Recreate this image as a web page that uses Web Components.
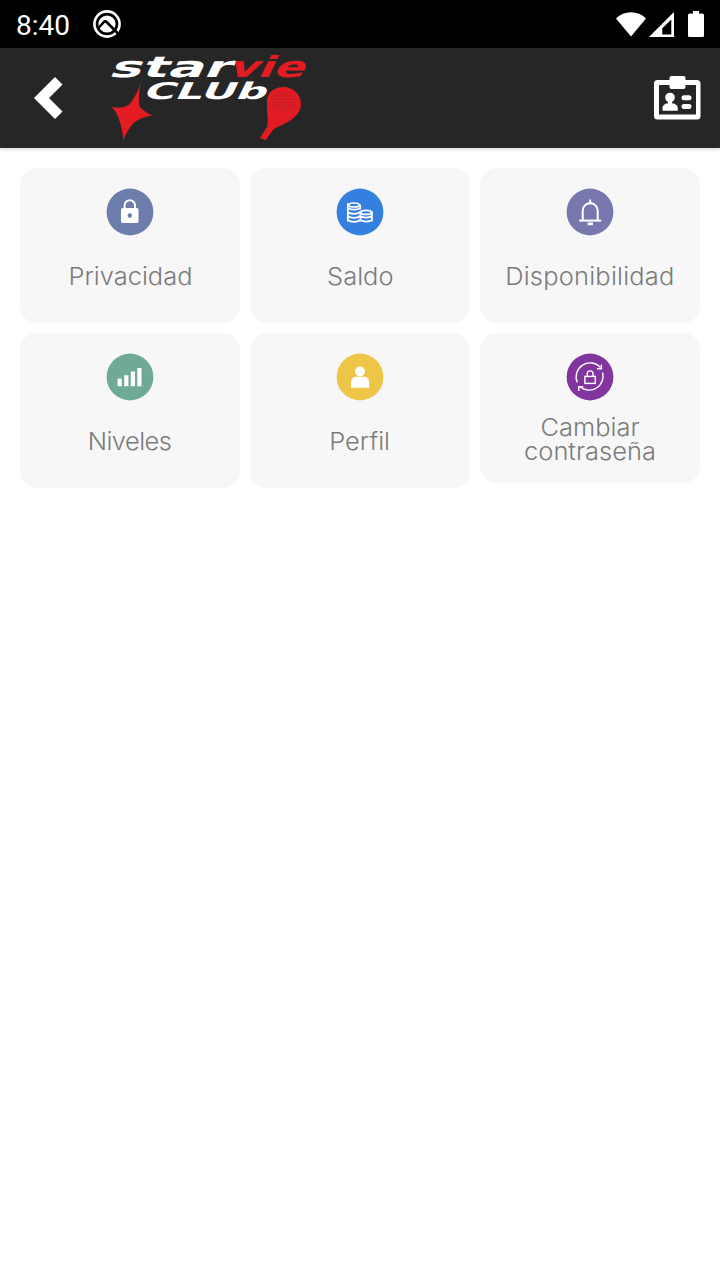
<!DOCTYPE html>
<html lang="es">
<head>
<meta charset="UTF-8">
<meta name="viewport" content="width=device-width, initial-scale=1.0">
<title>Starvie Club</title>
<style>
    :root {
        --color-bar: #262626;
        --color-card: #f7f7f7;
        --color-text: #7b7b7b;
        --color-brand: #e31b23;
    }

    body {
        margin: 0;
        min-height: 100vh;
        background: #fff;
        font-family: Inter, "Liberation Sans", sans-serif;
    }
</style>
</head>
<body>
    <status-bar hora="8:40"></status-bar>
    <app-header>
        <club-logo></club-logo>
    </app-header>
    <menu-grid>
        <menu-card icono="candado" color="#6d7dac">Privacidad</menu-card>
        <menu-card icono="monedas" color="#3480df">Saldo</menu-card>
        <menu-card icono="campana" color="#7678ae" style="--espacio: 0.2px">Disponibilidad</menu-card>
        <menu-card icono="barras" color="#6faa94" style="--espacio: -0.5px">Niveles</menu-card>
        <menu-card icono="persona" color="#edc547">Perfil</menu-card>
        <menu-card icono="cambiar" color="#82349f" compacta>Cambiar contraseña</menu-card>
    </menu-grid>

<script>
const ICONOS = {
    candado: `
        <rect x="15" y="20" width="17.5" height="15" rx="1.8" fill="#fff"/>
        <path d="M18.6 21v-3.6a5.2 5.2 0 0 1 10.4 0V21" fill="none" stroke="#fff" stroke-width="2"/>
        <circle cx="23.8" cy="27.5" r="2.2" fill="#6d7dac"/>`,
    monedas: `
        <g fill="none" stroke="#fff" stroke-width="1.7">
            <ellipse cx="18" cy="17" rx="5.3" ry="2"/>
            <path d="M11.8 15.2v18.2M11.8 19.8c3 2.4 9.5 2.4 12.5 0M24.2 16.5v5M11.8 24c3 2.4 9.5 2.4 12.5 0M11.8 28c3 2.4 9.5 2.4 12.5 0M11.8 32c3 2.4 9.5 2.4 12.5 0"/>
            <ellipse cx="30" cy="24.4" rx="5.3" ry="2"/>
            <path d="M24.4 23v10.4M36 23.5v9.9M24.4 28c3 2.2 8.6 2.2 11.6 0M24.4 32c3 2.2 8.6 2.2 11.6 0"/>
        </g>`,
    campana: `
        <g fill="none" stroke="#fff" stroke-width="2">
            <path d="M16.700 32v-9.300a7.500 7.500 0 0 1 15 0V32"/>
            <path d="M13.200 32.600h22"/>
            <path d="M24.200 11.500v4"/>
        </g>
        <rect x="21.6" y="34.6" width="5.4" height="2.6" rx=".6" fill="#fff"/>`,
    barras: `
        <path fill="#fff" d="M11.600 25.400h4.200v7.800h-4.200zM18.200 22.200h4.200v11h-4.200zM24.800 18.400h4.200v14.800h-4.200zM31.300 15h4.200v18.200h-4.200z"/>`,
    persona: `
        <circle cx="24" cy="18.500" r="4.900" fill="#fff"/>
        <path fill="#fff" d="M15 34.700v-5.200c0-3.800 2.500-5.800 5.400-5.800h7.400c2.900 0 5.400 2 5.400 5.800v5.200z"/>`,
    cambiar: `
        <g fill="none" stroke="#fff" stroke-width="1.4">
            <path d="M11.3 29.500A14 14 0 0 1 34.500 14.500M36.600 19.500A14 14 0 0 1 14 33.800"/>
            <path d="M35.400 11.500v4.200h-4.500M12.800 38v-4.300h4.500"/>
            <rect x="18.9" y="23.400" width="10.400" height="7"/>
            <path d="M21.200 23v-2.200a2.900 2.900 0 0 1 5.800 0v2.200"/>
        </g>`
};

class StatusBar extends HTMLElement {
    constructor() {
        super();
        this.attachShadow({ mode: 'open' });
    }

    connectedCallback() {
        const hora = this.getAttribute('hora') || '0:00';

        this.shadowRoot.innerHTML = `
            <style>
                :host {
                    display: flex;
                    align-items: center;
                    justify-content: space-between;
                    box-sizing: border-box;
                    height: 48px;
                    padding: 2px 14px 0 16px;
                    background: #000;
                    color: #fff;
                    font: 28px/48px Roboto, sans-serif;
                }

                .lado {
                    display: flex;
                    align-items: center;
                    gap: 22px;
                }

                span {
                    padding-top: 1px;
                }

                svg {
                    display: block;
                    margin-top: -2px;
                }
            </style>
            <div class="lado">
                <span>${hora}</span>
                <svg width="30" height="30" viewBox="0 0 30 30">
                    <circle cx="15" cy="15" r="12.600" fill="none" stroke="#fff" stroke-width="2.600"/>
                    <circle cx="15" cy="15" r="8.600" fill="#fff"/>
                    <path d="M6 19.500l6-6.500q1.300-1.200 2.600 0L26 24.500" fill="none" stroke="#000" stroke-width="2.500"/>
                </svg>
            </div>
            <svg width="90" height="30" viewBox="0 0 90 30">
                <path fill="#fff" d="M0 9.500C8 1 22 1 30 9.500L15 27.500z"/>
                <path fill="#fff" fill-rule="evenodd" d="M33 28L58 3v25zM46.300 25.500h9V10.600l-9 8.600z"/>
                <path fill="#fff" d="M77 2h6v2.500h3.500q1.500 0 1.500 1.500v20.500q0 1.500-1.500 1.500h-13q-1.500 0-1.500-1.500V6q0-1.500 1.500-1.500H77z"/>
            </svg>
        `;
    }
}

class ClubLogo extends HTMLElement {
    constructor() {
        super();
        this.attachShadow({ mode: 'open' });
    }

    connectedCallback() {
        this.shadowRoot.innerHTML = `
            <style>
                :host {
                    display: block;
                }

                svg {
                    display: block;
                }

                text {
                    font-family: "DejaVu Sans", sans-serif;
                    font-weight: 700;
                }

                .rojo {
                    fill: var(--color-brand);
                }
            </style>
            <svg width="220" height="100" viewBox="0 0 220 100" fill="#fff">
                <g transform="translate(8 28.500) skewX(-26)">
                    <text font-size="29" textLength="121" lengthAdjust="spacingAndGlyphs">star</text>
                    <text class="rojo" x="119" font-size="29" textLength="76" lengthAdjust="spacingAndGlyphs">vie</text>
                </g>
                <g transform="translate(42 50.500) skewX(-26)">
                    <text font-size="23" textLength="123" lengthAdjust="spacingAndGlyphs">CLUb</text>
                </g>
                <path class="rojo" d="M40.500 35Q38 49 39.500 58.500Q45 65 52.500 67.200Q40 69.500 33.500 75Q26 84 23.300 92.500Q22.500 81 19.500 73Q17 64 11.500 59Q22 61 29 57Q37 47 40.500 35z"/>
                <path class="rojo" d="M167 52C168 44 175 39 183 39C194 39 201 47 201 56C201 66 191 73 182 77C176 79.500 173 81 171.500 84L165.500 92.300L160 90L167 79C168.500 74 167.500 69 167 63z"/>
                <g stroke="#9f262a" stroke-width="1" stroke-dasharray="1.500 1.300" fill="none">
                    <path d="M178 45h14M174 48h22M172 51h25M172 54h25M172 57h24M174 60h20M178 63h13"/>
                </g>
            </svg>
        `;
    }
}

class AppHeader extends HTMLElement {
    constructor() {
        super();
        this.attachShadow({ mode: 'open' });
    }

    connectedCallback() {
        this.shadowRoot.innerHTML = `
            <style>
                :host {
                    display: flex;
                    align-items: center;
                    box-sizing: border-box;
                    height: 100px;
                    padding: 0 19px 0 34px;
                    background: var(--color-bar);
                    box-shadow: 0 1px 4px rgba(0, 0, 0, 0.2);
                }

                .logo {
                    flex: 1;
                    margin-left: 37px;
                }

                svg {
                    display: block;
                }
            </style>
            <svg width="29" height="42" viewBox="0 0 29 42">
                <path fill="#fff" d="M0 21L21 0l7.500 7.500L15 21l13.500 13.500L21 42z"/>
            </svg>
            <div class="logo"><slot></slot></div>
            <svg width="48" height="44" viewBox="0 0 48 44">
                <path fill="#fff" fill-rule="evenodd" d="M4 4h12.500V2q0-2 2-2h12q2 0 2 2v2H44q3.500 0 3.500 3.500v32.500q0 3.500-3.500 3.500H4.500Q1 43.500 1 40V7.500Q1 4 4.500 4zM6 9v29.500h37V9H32.500v2q0 2-2 2h-12q-2 0-2-2V9z"/>
                <circle cx="17" cy="21.500" r="4.800" fill="#fff"/>
                <path fill="#fff" d="M15 24h4v3.200q5.800.8 5.800 5v2.500H9.500v-2.500q0-4.200 5.500-5z"/>
                <path d="M31 21.700h5M31 30.600h5" stroke="#fff" stroke-width="5" stroke-linecap="round"/>
            </svg>
        `;
    }
}

class MenuGrid extends HTMLElement {
    constructor() {
        super();
        this.attachShadow({ mode: 'open' });
    }

    connectedCallback() {
        this.shadowRoot.innerHTML = `
            <style>
                :host {
                    display: grid;
                    grid-template-columns: repeat(3, 1fr);
                    align-items: start;
                    gap: 10px;
                    padding: 20px;
                }
            </style>
            <slot></slot>
        `;
    }
}

class MenuCard extends HTMLElement {
    constructor() {
        super();
        this.attachShadow({ mode: 'open' });
    }

    static get observedAttributes() {
        return ['icono', 'color'];
    }

    connectedCallback() {
        this.render();
    }

    attributeChangedCallback() {
        this.render();
    }

    render() {
        const icono = ICONOS[this.getAttribute('icono')] || '';
        const color = this.getAttribute('color') || '#999';

        this.shadowRoot.innerHTML = `
            <style>
                :host {
                    display: flex;
                    flex-direction: column;
                    align-items: center;
                    box-sizing: border-box;
                    height: 155px;
                    padding: 20px 20px 16px;
                    border-radius: 17px;
                    background: var(--color-card);
                }

                :host([compacta]) {
                    height: 150px;
                }

                svg {
                    display: block;
                    flex: none;
                }

                .etiqueta {
                    flex: 1;
                    display: flex;
                    align-items: center;
                    margin-top: 11px;
                    color: var(--color-text);
                    font-size: 24px;
                    font-weight: 350;
                    line-height: 24px;
                    letter-spacing: var(--espacio, 0);
                    text-align: center;
                    transform: scaleX(1.06);
                }
            </style>
            <svg width="48" height="48" viewBox="0 0 48 48">
                <circle cx="24" cy="24" r="23.400" fill="${color}"/>
                ${icono}
            </svg>
            <div class="etiqueta"><span><slot></slot></span></div>
        `;
    }
}

customElements.define('status-bar', StatusBar);
customElements.define('club-logo', ClubLogo);
customElements.define('app-header', AppHeader);
customElements.define('menu-grid', MenuGrid);
customElements.define('menu-card', MenuCard);
</script>
</body>
</html>
